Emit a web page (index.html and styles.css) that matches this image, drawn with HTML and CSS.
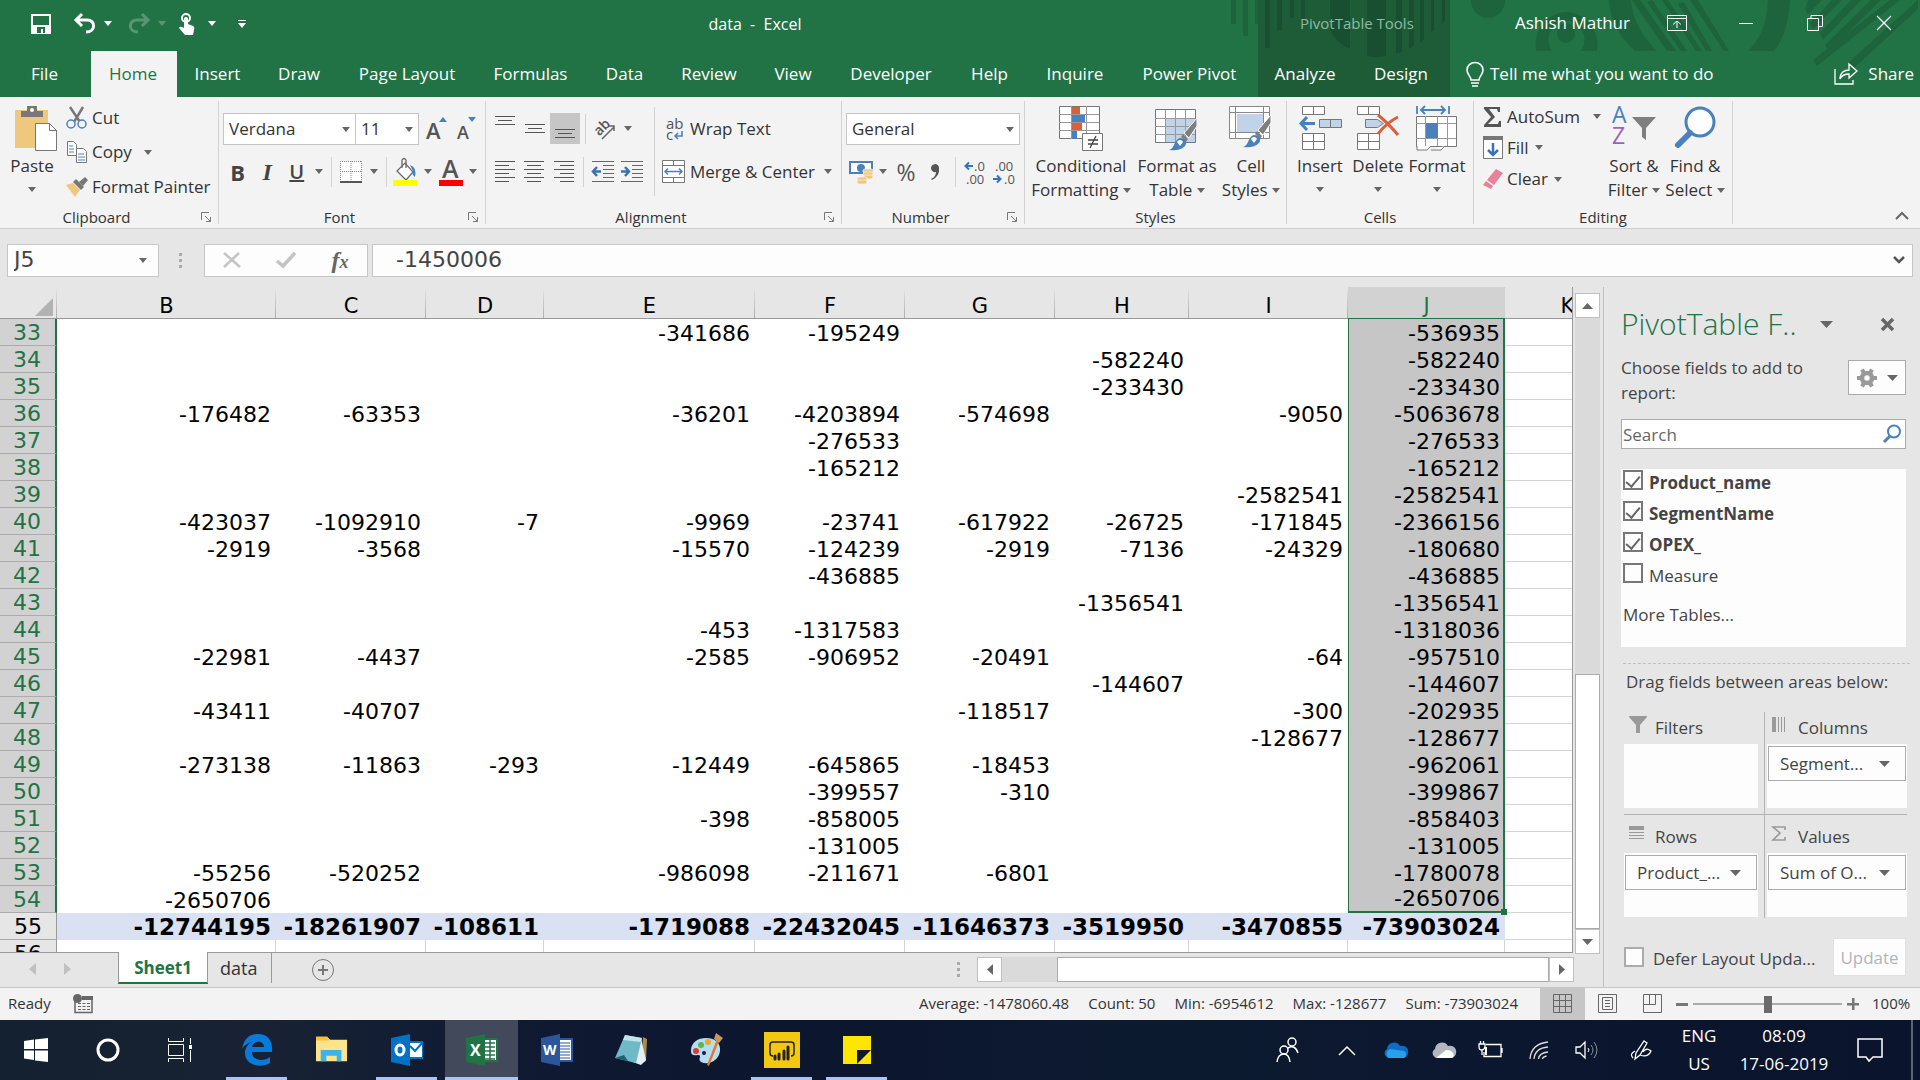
FILE: index.html
```html
<!DOCTYPE html>
<html lang="en">
<head>
<meta charset="utf-8">
<title>data - Excel</title>
<link rel="stylesheet" href="styles.css">
</head>
<body>
<svg class="defs" aria-hidden="true">
  <symbol id="caret" viewBox="0 0 8 5"><path d="M0 0h8L4 5z" fill="currentColor"/></symbol>
  <symbol id="launch" viewBox="0 0 10 10"><path d="M.5 8V.5H8M4 4l5 5M9.500 5v4.500H5" fill="none" stroke="#777"/></symbol>
  <symbol id="brush" viewBox="0 0 30 36"><path d="M29 1v8l-8 12-5-5z" fill="#7f7f7f" stroke="#fff"/><path d="M15 17l5 5-2 3-5-5z" fill="#7f7f7f"/><path d="M1 33c6-1 5-11 11-12 5 0 8 4 5 8-4 4-9 5-16 4z" fill="#4a81bd"/><path d="M9 25c2-3 5-2 6 0l-3 4z" fill="#fff"/></symbol>
</svg>

<header class="top">
  <svg class="deco" width="720" height="97" viewBox="0 0 720 97" aria-hidden="true">
    <g fill="#1d633c">
      <path d="M31 0h5v24h-5zM43 0h5v36h-5zM55 0h4v24h-4z"/>
      <path d="M271 0h34a17 18 0 0 1-34 0z"/>
      <path fill-rule="evenodd" d="M336 51a31 33 0 1 1 61 0h-16a18 19 0 1 0-29 0z"/><ellipse cx="366" cy="33" rx="9" ry="10"/>
      <path d="M409 0h22q2 28 26 51h-22Q410 28 409 0zM568 0h22q-2 34-16 51h-26q19-18 20-51zM432 0h8l36 51h-9zM447 2l34 49h6L452 0zM462 0l34 51h6L468 0zM478 4l28 47h6L484 2zM490 0l34 51h5L498 0z"/>
      <path d="M608 0h14l-14 14-3-5zM632 0h10l-29 29-3-6zM651 0h10l-38 40-3-7zM671 0h10l-52 51-4-6zM690 0h10l-83 66-4-6zM718 0v9l-64 59-6-5z"/>
    </g>
  </svg>
  <div class="context-bg">
    <svg width="192" height="97" viewBox="0 0 192 97" aria-hidden="true"><g fill="#184f30"><path d="M7 0h5v48H7zM19 0h5v30h-5zM32 0h4v18h-4zM43 0h4v24h-4z"/><path d="M72 0h20v49Q78 43 72 30zM109 0h19v56q-10 2-19 0zM138 0h6v52l-6 2zM151 0h5v46l-5 3zM162 0h4v39l-4 4zM173 0h3v30l-3 3zM184 0h3v20l-3 4z"/></g></svg>
  </div>
  <div class="qat">
    <button aria-label="Save" class="q-save"><svg width="20" height="20" viewBox="0 0 20 20"><path d="M1 1h18v18H1z" fill="none" stroke="#fff" stroke-width="2"/><path d="M2 11h16v8H2z" fill="#fff"/><path d="M6 13h8v6h-2v-4h-2v4H6z" fill="#217346"/></svg></button>
    <button aria-label="Undo" class="q-undo"><svg width="24" height="22" viewBox="0 0 24 22"><path d="M9 1L3 7l6 6M4 7h10c9 0 9 12-1 12" fill="none" stroke="#fff" stroke-width="3"/></svg></button>
    <button aria-label="Undo list" class="q-c"><svg width="8" height="5"><use href="#caret"/></svg></button>
    <button aria-label="Redo" class="q-redo faded"><svg width="24" height="22" viewBox="0 0 24 22"><path d="M15 1l6 6-6 6M20 7H10C1 7 1 19 11 19" fill="none" stroke="#fff" stroke-width="3"/></svg></button>
    <button aria-label="Redo list" class="q-c faded"><svg width="8" height="5"><use href="#caret"/></svg></button>
    <button aria-label="Touch mode" class="q-touch"><svg width="18" height="22" viewBox="0 0 18 22"><circle cx="8" cy="5" r="4" fill="none" stroke="#fff" stroke-width="2"/><path d="M6 5q2-2 4 0v6l5 2q2 1 1 4l-1 5H7l-6-7q1-2 3-1l2 1z" fill="#fff"/></svg></button>
    <button aria-label="Touch list" class="q-c"><svg width="8" height="5"><use href="#caret"/></svg></button>
    <button aria-label="Customize" class="q-cust"><svg width="8" height="8" viewBox="0 0 8 8"><path d="M0 0h8v1H0zM0 3h8L4 8z" fill="#fff"/></svg></button>
    <h1>data&nbsp; -&nbsp; Excel</h1>
  </div>
  <div class="context-name">PivotTable Tools</div>
  <div class="window">
    <span class="user">Ashish Mathur</span>
    <button aria-label="Ribbon display"><svg width="20" height="16" viewBox="0 0 20 16"><path d="M.5.500h19v15H.5zM.5 3.500h19M10 13V6M6 9.500L10 6l4 3.500" fill="none" stroke="#fff"/></svg></button>
    <button aria-label="Minimize"><svg width="16" height="16"><path d="M1 8.500h14" stroke="#fff"/></svg></button>
    <button aria-label="Restore"><svg width="16" height="16" viewBox="0 0 16 16"><path d="M.5 3.500h11v12H.5zM4 3V.5h11.500v11H12" fill="none" stroke="#fff"/></svg></button>
    <button aria-label="Close"><svg width="16" height="16"><path d="M1 1l14 14M15 1L1 15" stroke="#fff" stroke-width="1.300"/></svg></button>
  </div>
  <nav class="tabs">
    <a href="#">File</a><a href="#" class="on">Home</a><a href="#">Insert</a><a href="#">Draw</a><a href="#">Page Layout</a><a href="#">Formulas</a><a href="#">Data</a><a href="#">Review</a><a href="#">View</a><a href="#">Developer</a><a href="#">Help</a><a href="#">Inquire</a><a href="#">Power Pivot</a>
  </nav>
  <nav class="ctabs"><a href="#">Analyze</a><a href="#">Design</a></nav>
  <div class="tell">
    <button><svg width="18" height="25" viewBox="0 0 18 25"><path d="M5 18c0-4-4-5-4-10a8 7.500 0 0 1 16 0c0 5-4 6-4 10zM5 21h8M6 24h6" fill="none" stroke="#fff" stroke-width="1.600"/></svg>Tell me what you want to do</button>
    <button class="share"><svg width="24" height="22" viewBox="0 0 24 22"><path d="M1 6v15h18v-4M6 16c0-7 5-9 9-9V1l8 7-8 7v-4c-4 0-7 1-9 5z" fill="none" stroke="#fff" stroke-width="1.300"/></svg>Share</button>
  </div>
</header>

<section class="ribbon">
  <div class="group g-clip">
    <div class="body">
      <button class="big paste"><svg width="42" height="46" viewBox="0 0 42 46"><path d="M0 4h33v38H0z" fill="#edc87e"/><path d="M6 11V5h6V0h10v5h6v6z" fill="#777"/><circle cx="17" cy="4" r="2" fill="#fff"/><path d="M20.500 17.500h14l7 7v20h-21z" fill="#fff" stroke="#777"/><path d="M34.500 17v7.500H42" fill="none" stroke="#777"/></svg><span>Paste</span><svg class="c" width="8" height="5"><use href="#caret"/></svg></button>
      <div class="col">
        <button><svg width="22" height="22" viewBox="0 0 22 22"><path d="M4 0l10 15M17 0L8 15" stroke="#777" stroke-width="2.500"/><circle cx="5" cy="17" r="4" fill="#f3f3f3" stroke="#4a81bd" stroke-width="1.500"/><circle cx="16" cy="17" r="4" fill="#f3f3f3" stroke="#4a81bd" stroke-width="1.500"/></svg>Cut</button>
        <button><svg width="22" height="22" viewBox="0 0 22 22"><g fill="#fff" stroke="#777"><path d="M1.500.500h6l3 3v11h-9z"/><path d="M10.500 7.500h7l3 3v11h-10z"/></g><path d="M3 5h4M3 8h5M3 11h5M12 13h6M12 16h7M12 19h7" stroke="#4a81bd" stroke-width="1.200"/></svg>Copy<svg class="c" width="8" height="5"><use href="#caret"/></svg></button>
        <button><svg width="22" height="20" viewBox="0 0 22 20"><path d="M0 8l7-2 7 7-5 7z" fill="#edc87e"/><path d="M7 5l3-3 8 8-3 3z" fill="#777"/><path d="M13 5l6-5 3 3-5 6z" fill="#777"/></svg>Format Painter</button>
      </div>
    </div>
    <div class="name more">Clipboard<button aria-label="Clipboard settings"><svg width="10" height="10"><use href="#launch"/></svg></button></div>
  </div>

  <div class="group g-font">
    <div class="body rows">
      <div class="row">
        <label class="sel w134"><select aria-label="Font"><option>Verdana</option></select><svg width="8" height="5"><use href="#caret"/></svg></label><label class="sel w65"><select aria-label="Size"><option>11</option></select><svg width="8" height="5"><use href="#caret"/></svg></label>
        <button class="w30"><svg width="22" height="24" viewBox="0 0 22 24"><text x="0" y="22" font-size="22" class="ico-b">A</text><path d="M13 5l4-5 4 5z" fill="#4a81bd"/></svg></button>
        <button class="w30"><svg width="22" height="24" viewBox="0 0 22 24"><text x="2" y="22" font-size="18" class="ico-b">A</text><path d="M13 0h8l-4 5z" fill="#4a81bd"/></svg></button>
      </div>
      <div class="row">
        <button class="w30 gl"><b>B</b></button><button class="w30 gl"><i>I</i></button><button class="w30 gl"><u>U</u></button><button class="w16"><svg width="8" height="5"><use href="#caret"/></svg></button><hr>
        <button class="w30"><svg width="22" height="22" viewBox="0 0 22 22"><path d="M0 0h22v22H0z" fill="#fff"/><path d="M.5 0v21M21.500 0v21M11 0v21M0 .5h22M0 10.500h22" fill="none" stroke="#888" stroke-dasharray="1 1"/><path d="M0 21h22" stroke="#555" stroke-width="2"/></svg></button><button class="w16"><svg width="8" height="5"><use href="#caret"/></svg></button><hr>
        <button class="w30"><svg width="24" height="28" viewBox="0 0 24 28"><path d="M4 13l8-8 8 9-7 8z" fill="#fff" stroke="#666" stroke-width="1.200"/><path d="M9 10V2q2-3 4 0v8" fill="none" stroke="#666" stroke-width="1.300"/><path d="M17 7q7 2 5 12-4-3-2-6z" fill="#4a81bd"/><path d="M0 22h24v6H0z" fill="#ff0"/></svg></button><button class="w16"><svg width="8" height="5"><use href="#caret"/></svg></button>
        <button class="w30"><svg width="24" height="28" viewBox="0 0 24 28"><text x="3" y="20" font-size="25" class="ico-b">A</text><path d="M0 22h24v6H0z" fill="red"/></svg></button><button class="w16"><svg width="8" height="5"><use href="#caret"/></svg></button>
      </div>
    </div>
    <div class="name more">Font<button aria-label="Font settings"><svg width="10" height="10"><use href="#launch"/></svg></button></div>
  </div>

  <div class="group g-align">
    <div class="body">
      <div class="rows">
        <div class="row">
          <button class="w30 v-t"><svg width="20" height="10"><path d="M0 .5h20M3 4.500h14M0 8.500h20" stroke="#555"/></svg></button><button class="w30"><svg width="20" height="10"><path d="M0 .5h20M3 4.500h14M0 8.500h20" stroke="#555"/></svg></button><button class="w30 pressed v-b"><svg width="20" height="10"><path d="M0 .5h20M3 4.500h14M0 8.500h20" stroke="#555"/></svg></button><hr>
          <button class="w30"><svg width="22" height="22" viewBox="0 0 22 22"><text x="0" y="14" font-size="14" class="ico-b" transform="rotate(-45 8 10)">ab</text><path d="M8 21L20 9M15 8h5v5" fill="none" stroke="#666" stroke-width="1.500"/></svg></button><button class="w16"><svg width="8" height="5"><use href="#caret"/></svg></button>
        </div>
        <div class="row">
          <button class="w30"><svg width="20" height="22"><path d="M0 .5h20M0 4.500h14M0 8.500h20M0 12.500h14M0 16.500h20M0 20.500h14" stroke="#555"/></svg></button><button class="w30"><svg width="20" height="22"><path d="M0 .5h20M3 4.500h14M0 8.500h20M3 12.500h14M0 16.500h20M3 20.500h14" stroke="#555"/></svg></button><button class="w30"><svg width="20" height="22"><path d="M0 .5h20M6 4.500h14M0 8.500h20M6 12.500h14M0 16.500h20M6 20.500h14" stroke="#555"/></svg></button><hr>
          <button class="w30"><svg width="22" height="22"><path d="M0 .5h22M11 4.500h11M11 8.500h11M11 12.500h11M11 16.500h11M0 20.500h22" stroke="#666"/><path d="M9 10.500H1M5 6l-4 4.500L5 15" fill="none" stroke="#3a73b5" stroke-width="2.500"/></svg></button><button class="w30"><svg width="22" height="22"><path d="M0 .5h22M11 4.500h11M11 8.500h11M11 12.500h11M11 16.500h11M0 20.500h22" stroke="#666"/><path d="M0 10.500h8M4 6l4 4.500L4 15" fill="none" stroke="#3a73b5" stroke-width="2.500"/></svg></button>
        </div>
      </div>
      <div class="rows wrap">
        <div class="row"><button class="txt"><svg width="24" height="24" viewBox="0 0 24 24"><text x="4" y="12" font-size="15" class="ico">ab</text><text x="4" y="23" font-size="15" class="ico">c</text><path d="M20 14v5h-6M16 16l-3 3 3 3" fill="none" stroke="#4a81bd" stroke-width="1.600"/></svg>Wrap Text</button></div>
        <div class="row"><button class="txt"><svg width="24" height="24" viewBox="0 0 24 24"><path d="M.5.500h22v22H.5zM.5 5.500h22M.5 17.500h22M11.500.500v5M11.500 17.500v5" fill="#fff" stroke="#777"/><path d="M3 11.500h17M6 8.500l-3 3 3 3M17 8.500l3 3-3 3" fill="none" stroke="#4a81bd" stroke-width="1.500"/></svg>Merge &amp; Center</button><button class="w16"><svg width="8" height="5"><use href="#caret"/></svg></button></div>
      </div>
    </div>
    <div class="name more">Alignment<button aria-label="Alignment settings"><svg width="10" height="10"><use href="#launch"/></svg></button></div>
  </div>

  <div class="group g-num">
    <div class="body rows">
      <div class="row"><label class="sel w174"><select aria-label="Number format"><option>General</option></select><svg width="8" height="5"><use href="#caret"/></svg></label></div>
      <div class="row">
        <button class="w30"><svg width="24" height="24" viewBox="0 0 24 24"><path d="M0 1h24v13H0z" fill="#4a81bd"/><path d="M2 3h20v9H2z" fill="#fff"/><circle cx="12" cy="8" r="4" fill="#4a81bd"/><g fill="#edc87e" stroke="#f3f3f3" stroke-width=".8"><rect x="14" y="9" width="10" height="4" rx="2"/><rect x="14" y="12" width="10" height="4" rx="2"/><rect x="14" y="15" width="10" height="4" rx="2"/><rect x="8" y="17" width="10" height="4" rx="2"/><rect x="8" y="20" width="10" height="4" rx="2"/></g></svg></button><button class="w16"><svg width="8" height="5"><use href="#caret"/></svg></button>
        <button class="w30 pct">%</button><button class="w30"><svg width="10" height="16" viewBox="0 0 10 16"><path d="M1 15Q6 13 6 8a4 4 0 1 1 3-4q1 8-7 12z" fill="#555"/></svg></button><hr>
        <button class="w30"><svg width="24" height="26" viewBox="0 0 24 26"><text x="10" y="12" font-size="13" class="ico">.0</text><text x="2" y="25" font-size="13" class="ico">.00</text><path d="M9 7H2M5 3.500L1.500 7 5 10.500" fill="none" stroke="#3a73b5" stroke-width="2"/></svg></button><button class="w30"><svg width="24" height="26" viewBox="0 0 24 26"><text x="2" y="12" font-size="13" class="ico">.00</text><text x="11" y="25" font-size="13" class="ico">.0</text><path d="M0 20h8M4 16.500L7.500 20 4 23.500" fill="none" stroke="#3a73b5" stroke-width="2"/></svg></button>
      </div>
    </div>
    <div class="name more">Number<button aria-label="Number settings"><svg width="10" height="10"><use href="#launch"/></svg></button></div>
  </div>

  <div class="group g-styles">
    <div class="body">
      <button class="big w104"><svg width="44" height="46" viewBox="0 0 44 46"><path d="M.5.500h40v32H.5z" fill="#fff" stroke="#777"/><path d="M0 8.500h40M0 16.500h40M0 24.500h40M12.500 0v33M27.500 0v33" stroke="#999"/><path d="M13 1h8v7h-8zM13 17h10v7H13z" fill="#d9603b"/><path d="M13 9h13v7H13zM13 25h5v8h-5z" fill="#4a81bd"/><path d="M23.500 27.500h20v17h-20z" fill="#fff" stroke="#777"/><path d="M29 34h10M29 38h10M37 30l-6 12" stroke="#444" stroke-width="1.300"/></svg><span>Conditional<br>Formatting <svg width="8" height="5"><use href="#caret"/></svg></span></button>
      <button class="big w88"><svg width="44" height="46" viewBox="0 0 44 46"><path d="M.5 3.500h40v33H.5z" fill="#fff" stroke="#777"/><path d="M11 12h29v24H11z" fill="#c0d3e8"/><path d="M0 12.500h40M0 20.500h40M0 28.500h40M10.500 4v32M20.500 4v32M30.500 4v32" stroke="#999"/><use href="#brush" x="12" y="11" width="32" height="36"/></svg><span>Format as<br>Table <svg width="8" height="5"><use href="#caret"/></svg></span></button>
      <button class="big w60"><svg width="44" height="46" viewBox="0 0 44 46"><path d="M.5.500h40v32H.5zM.5 6.500h40M.5 26.500h40M6.500.500v32M34.500.500v32" fill="#fff" stroke="#888"/><path d="M8 8h26v18H8z" fill="#c0d3e8"/><use href="#brush" x="12" y="8" width="32" height="36"/></svg><span>Cell<br>Styles <svg width="8" height="5"><use href="#caret"/></svg></span></button>
    </div>
    <div class="name">Styles</div>
  </div>

  <div class="group g-cells">
    <div class="body">
      <button class="big w58"><svg width="44" height="46" viewBox="0 0 44 46"><path d="M4.500.500h22v8h-22zM15.500.500v8M4.500 27.500h22v16h-22zM4.500 35.500h22M15.500 27.500v16" fill="#fff" stroke="#777"/><path d="M21.500 13.500h22v8h-22zM32.500 13.500v8" fill="#c0d3e8" stroke="#777"/><path d="M17 17.500H3M9 11l-6 6.500L9 24" fill="none" stroke="#4a81bd" stroke-width="3"/></svg><span>Insert</span><svg class="c" width="8" height="5"><use href="#caret"/></svg></button>
      <button class="big w58"><svg width="44" height="46" viewBox="0 0 44 46"><path d="M1.500.500h22v8h-22zM12.500.500v8M1.500 27.500h22v16h-22zM1.500 35.500h22M12.500 27.500v16" fill="#fff" stroke="#777"/><path d="M9.500 13.500h12l6 4-6 4h-12z" fill="#c0d3e8" stroke="#777"/><path d="M22 9q10 8 20 20M42 11Q30 17 22 28" fill="none" stroke="#d9603b" stroke-width="3"/></svg><span>Delete</span><svg class="c" width="8" height="5"><use href="#caret"/></svg></button>
      <button class="big w60"><svg width="44" height="46" viewBox="0 0 44 46"><path d="M1.500 10.500h40v30h-40z" fill="#fff" stroke="#777"/><path d="M1 17.500h40M1 32.500h40M10.500 10v30M32.500 10v30M22.500 10v30" stroke="#999"/><path d="M11 17h12v15H11z" fill="#4a81bd"/><path d="M2 40v4h10l4-4M16 44h10l4-4" fill="#fff" stroke="#777"/><path d="M2 0v8M34 0v8M6 4h24M10 0L6 4l4 4M26 0l4 4-4 4" fill="none" stroke="#4a81bd" stroke-width="1.800"/></svg><span>Format</span><svg class="c" width="8" height="5"><use href="#caret"/></svg></button>
    </div>
    <div class="name">Cells</div>
  </div>

  <div class="group g-edit">
    <div class="body">
      <div class="col">
        <button class="autosum"><svg width="20" height="20" viewBox="0 0 20 20"><path d="M1 0h16v5h-2l-1-3H6l6 8-7 7h10l1-3h2v6H1v-2l7-8-7-8z" fill="#555"/></svg>AutoSum<svg class="c" width="8" height="5"><use href="#caret"/></svg></button>
        <button><svg width="20" height="24" viewBox="0 0 20 24"><path d="M.5.500h19v22H.5z" fill="#fff" stroke="#777"/><path d="M0 0h20v4H0z" fill="#777"/><path d="M10 7v12M5 14l5 5 5-5" fill="none" stroke="#3a73b5" stroke-width="2.500"/></svg>Fill<svg class="c" width="8" height="5"><use href="#caret"/></svg></button>
        <button><svg width="20" height="20" viewBox="0 0 20 20"><path d="M13 0l7 4-9 12-7-5zM3 12l7 5-2 3-8-4z" fill="#e8819a"/></svg>Clear<svg class="c" width="8" height="5"><use href="#caret"/></svg></button>
      </div>
      <button class="big w60"><svg width="44" height="46" viewBox="0 0 44 46"><text x="0" y="17" font-size="23" fill="#4a81bd">A</text><text x="0" y="38" font-size="23" fill="#9b63bd">Z</text><path d="M20 11h24L34 22v12l-4-3v-9z" fill="#7f7f7f"/></svg><span>Sort &amp;<br>Filter <svg width="8" height="5"><use href="#caret"/></svg></span></button>
      <button class="big w62"><svg width="44" height="46" viewBox="0 0 44 46"><circle cx="27" cy="16" r="14" fill="#fff" stroke="#4a81bd" stroke-width="3"/><path d="M17 27L5 39" stroke="#4a81bd" stroke-width="6" stroke-linecap="round"/></svg><span>Find &amp;<br>Select <svg width="8" height="5"><use href="#caret"/></svg></span></button>
    </div>
    <div class="name">Editing</div>
  </div>
  <button class="collapse" aria-label="Collapse ribbon"><svg width="14" height="9"><path d="M1 8l6-6 6 6" fill="none" stroke="#666" stroke-width="2"/></svg></button>
</section>

<section class="formula">
  <label class="namebox"><input aria-label="Name box" value="J5"><svg width="8" height="5"><use href="#caret"/></svg></label>
  <svg class="dots" width="3" height="15"><path d="M0 0h3v3H0zM0 6h3v3H0zM0 12h3v3H0z" fill="#aaa"/></svg>
  <div class="fx"><button aria-label="Cancel"><svg width="18" height="16"><path d="M1 1l16 14M16 1L1 15" stroke="#c4c4c4" stroke-width="2.500"/></svg></button><button aria-label="Enter"><svg width="20" height="16"><path d="M1 9l6 5L19 1" fill="none" stroke="#c4c4c4" stroke-width="3.500"/></svg></button><button><i>f</i><i class="x">x</i></button></div>
  <label class="fbox"><input aria-label="Formula" value="-1450006"><svg width="12" height="8"><path d="M1 1l5 5 5-5" fill="none" stroke="#555" stroke-width="2.500"/></svg></label>
</section>

<main>
  <section class="work">
    <div class="view">
      <div class="sheet">
        <table>
          <colgroup><col class="c-n"><col class="c-b"><col class="c-c"><col class="c-d"><col class="c-e"><col class="c-c"><col class="c-c"><col class="c-h"><col class="c-i"><col class="c-j"><col class="c-k"></colgroup>
          <thead><tr><th class="corner"><svg width="18" height="18"><path d="M18 0v18H0z" fill="#b2b2b2"/></svg><th>B<th>C<th>D<th>E<th>F<th>G<th>H<th>I<th class="sel-h">J<th>K</thead>
          <tbody>
            <tr><th>33<td><td><td><td>-341686<td>-195249<td><td><td><td>-536935<td>
            <tr><th>34<td><td><td><td><td><td><td>-582240<td><td>-582240<td>
            <tr><th>35<td><td><td><td><td><td><td>-233430<td><td>-233430<td>
            <tr><th>36<td>-176482<td>-63353<td><td>-36201<td>-4203894<td>-574698<td><td>-9050<td>-5063678<td>
            <tr><th>37<td><td><td><td><td>-276533<td><td><td><td>-276533<td>
            <tr><th>38<td><td><td><td><td>-165212<td><td><td><td>-165212<td>
            <tr><th>39<td><td><td><td><td><td><td><td>-2582541<td>-2582541<td>
            <tr><th>40<td>-423037<td>-1092910<td>-7<td>-9969<td>-23741<td>-617922<td>-26725<td>-171845<td>-2366156<td>
            <tr><th>41<td>-2919<td>-3568<td><td>-15570<td>-124239<td>-2919<td>-7136<td>-24329<td>-180680<td>
            <tr><th>42<td><td><td><td><td>-436885<td><td><td><td>-436885<td>
            <tr><th>43<td><td><td><td><td><td><td>-1356541<td><td>-1356541<td>
            <tr><th>44<td><td><td><td>-453<td>-1317583<td><td><td><td>-1318036<td>
            <tr><th>45<td>-22981<td>-4437<td><td>-2585<td>-906952<td>-20491<td><td>-64<td>-957510<td>
            <tr><th>46<td><td><td><td><td><td><td>-144607<td><td>-144607<td>
            <tr><th>47<td>-43411<td>-40707<td><td><td><td>-118517<td><td>-300<td>-202935<td>
            <tr><th>48<td><td><td><td><td><td><td><td>-128677<td>-128677<td>
            <tr><th>49<td>-273138<td>-11863<td>-293<td>-12449<td>-645865<td>-18453<td><td><td>-962061<td>
            <tr><th>50<td><td><td><td><td>-399557<td>-310<td><td><td>-399867<td>
            <tr><th>51<td><td><td><td>-398<td>-858005<td><td><td><td>-858403<td>
            <tr><th>52<td><td><td><td><td>-131005<td><td><td><td>-131005<td>
            <tr><th>53<td>-55256<td>-520252<td><td>-986098<td>-211671<td>-6801<td><td><td>-1780078<td>
            <tr class="last"><th>54<td>-2650706<td><td><td><td><td><td><td><td>-2650706<td>
          </tbody>
          <tfoot>
            <tr class="total"><th>55<td>-12744195<td>-18261907<td>-108611<td>-1719088<td>-22432045<td>-11646373<td>-3519950<td>-3470855<td>-73903024<td>
            <tr class="blank"><th>56<td><td><td><td><td><td><td><td><td><td>
          </tfoot>
        </table>
      </div>
      <div class="vscroll"><button aria-label="Scroll up"><svg width="11" height="6"><path d="M0 6l5.500-6L11 6z" fill="#666"/></svg></button><i class="gap"></i><i class="thumb"></i><button aria-label="Scroll down"><svg width="11" height="6"><path d="M0 0h11L5.500 6z" fill="#666"/></svg></button></div>
    </div>
    <div class="sheets">
      <button aria-label="Previous sheet" class="nav1"><svg width="7" height="12"><path d="M7 0v12L0 6z" fill="#c0c0c0"/></svg></button><button aria-label="Next sheet" class="nav2"><svg width="7" height="12"><path d="M0 0v12l7-6z" fill="#c0c0c0"/></svg></button>
      <a href="#" class="on">Sheet1</a><a href="#">data</a>
      <button aria-label="New sheet" class="plus"><svg width="24" height="24"><circle cx="12" cy="12" r="10.500" fill="none" stroke="#777"/><path d="M12 7v10M7 12h10" stroke="#777" stroke-width="2"/></svg></button>
      <svg class="dots" width="3" height="15"><path d="M0 0h3v3H0zM0 6h3v3H0zM0 12h3v3H0z" fill="#aaa"/></svg>
      <div class="hscroll"><button aria-label="Scroll left"><svg width="6" height="11"><path d="M6 0v11L0 5.500z" fill="#666"/></svg></button><i class="gap"></i><i class="thumb"></i><button aria-label="Scroll right"><svg width="6" height="11"><path d="M0 0v11l6-5.500z" fill="#666"/></svg></button></div>
    </div>
  </section>

  <aside>
    <div class="p-head"><h2>PivotTable F..</h2><button aria-label="Pane options"><svg width="13" height="7"><path d="M0 0h13L6.500 7z" fill="#666"/></svg></button><button aria-label="Close pane" class="x"><svg width="15" height="15"><path d="M2 2l11 11M13 2L2 13" stroke="#666" stroke-width="3.500"/></svg></button></div>
    <div class="p-choose"><p>Choose fields to add to report:</p><button aria-label="Tools"><svg width="20" height="20" viewBox="0 0 20 20"><circle cx="10" cy="10" r="5" fill="none" stroke="#999" stroke-width="4.500"/><path d="M0 10h4m12 0h4M5 1.500l2 3.500m6 10l2 3.500M15 1.500L13 5M7 15l-2 3.500" stroke="#999" stroke-width="4"/></svg><svg width="11" height="6"><path d="M0 0h11L5.500 6z" fill="#666"/></svg></button></div>
    <label class="search"><input placeholder="Search" aria-label="Search"><svg width="20" height="20"><circle cx="12" cy="7.500" r="6" fill="none" stroke="#4a81bd" stroke-width="2"/><path d="M8 12l-6 6" stroke="#4a81bd" stroke-width="3"/></svg></label>
    <div class="fields">
      <label><input type="checkbox" checked><b>Product_name</b></label>
      <label><input type="checkbox" checked><b>SegmentName</b></label>
      <label><input type="checkbox" checked><b>OPEX_</b></label>
      <label><input type="checkbox"><span>Measure</span></label>
      <a href="#">More Tables...</a>
    </div>
    <p class="drag">Drag fields between areas below:</p>
    <div class="areas">
      <section><h3><svg width="18" height="18"><path d="M0 0h18v1l-7 8v8H7V9L0 1z" fill="#999"/></svg>Filters</h3><div class="drop"></div></section>
      <section><h3><svg width="14" height="16"><path d="M0 0h4v15H0zM6 0h1v15H6zM9 0h1v15H9zM12 0h1v15h-1z" fill="#999"/></svg>Columns</h3><div class="drop"><button>Segment...<svg width="11" height="6"><path d="M0 0h11L5.500 6z" fill="#666"/></svg></button></div></section>
      <section><h3><svg width="16" height="16"><path d="M0 0h15v4H0zM0 6h15v1H0zM0 9h15v1H0zM0 12h15v1H0z" fill="#999"/></svg>Rows</h3><div class="drop"><button>Product_...<svg width="11" height="6"><path d="M0 0h11L5.500 6z" fill="#666"/></svg></button></div></section>
      <section><h3><svg width="14" height="16"><path d="M13 4V1H1l7 6-7 7h12v-3" fill="none" stroke="#999" stroke-width="1.600"/></svg>Values</h3><div class="drop"><button>Sum of O...<svg width="11" height="6"><path d="M0 0h11L5.500 6z" fill="#666"/></svg></button></div></section>
    </div>
    <div class="defer"><label><input type="checkbox"><span>Defer Layout Upda...</span></label><button disabled>Update</button></div>
  </aside>
</main>

<footer class="status">
  <span>Ready</span>
  <svg class="macro" width="20" height="20"><path d="M2 5v13.500h17V2" fill="none" stroke="#666" stroke-width="1.500"/><path d="M9 2h11v4H9z" fill="#666"/><circle cx="4.500" cy="4.500" r="4.500" fill="#666"/><path d="M5 9.500h12M5 12.500h12M5 15.500h12" stroke="#666" stroke-dasharray="3 1.500"/></svg>
  <div class="stats"><span>Average: -1478060.48</span><span>Count: 50</span><span>Min: -6954612</span><span>Max: -128677</span><span>Sum: -73903024</span></div>
  <button class="pressed" aria-label="Normal"><svg width="20" height="20"><path d="M.5.500h18v18H.5zM6.500.500v18M12.500.500v18M.5 6.500h18M.5 12.500h18" fill="none" stroke="#666"/></svg></button>
  <button aria-label="Page layout"><svg width="20" height="20"><path d="M.5.500h18v18H.5zM4.500 3.500h10v12h-10zM7 6.500h5M7 9.500h5M7 12.500h5" fill="none" stroke="#666"/></svg></button>
  <button aria-label="Page break"><svg width="20" height="20"><path d="M.5.500h18v18H.5zM.5 10.500h12v-10M6.500.500v10" fill="none" stroke="#666"/></svg></button>
  <button class="z" aria-label="Zoom out"><svg width="12" height="3"><path d="M0 0h12v3H0z" fill="#777"/></svg></button>
  <input type="range" min="0" max="100" value="50" aria-label="Zoom">
  <button class="z" aria-label="Zoom in"><svg width="12" height="12"><path d="M0 5h12v2.500H0zM5 0h2.500v12H5z" fill="#777"/></svg></button>
  <span class="pc">100%</span>
</footer>

<footer class="taskbar">
  <div class="sys">
    <button aria-label="Start"><svg width="24" height="24"><path d="M0 3l10-1.500V11H0zM11 1.500L24 0v11H11zM0 12.500h10V22L0 20.500zM11 12.500h13V24l-13-1.500z" fill="#fff"/></svg></button>
    <button aria-label="Cortana"><svg width="24" height="24"><circle cx="12" cy="12" r="10" fill="none" stroke="#fff" stroke-width="3"/></svg></button>
    <button aria-label="Task view"><svg width="26" height="24"><path d="M1.500 0v3.500h15V0M1.500 6.500h15v11h-15zM1.500 24v-3.500h15V24M23.500 0v6M23.500 12v12" fill="none" stroke="#fff"/><path d="M22 7h3v4h-3z" fill="#fff"/></svg></button>
  </div>
  <div class="apps">
    <button class="run" aria-label="Edge"><svg width="32" height="32" viewBox="0 0 32 32"><path d="M1 15C3 4 9 0 17 0c10 0 15 7 14 18H11c0 9 12 10 18 5v6c-10 6-25 2-25-10 0-5 3-9 7-11-4 1-8 3-10 7zM11 13h12c0-7-11-7-12 0z" fill="#0a7ad8"/></svg></button>
    <button aria-label="File Explorer"><svg width="32" height="28" viewBox="0 0 34 28"><path d="M0 0h12l3 3h18v23H0z" fill="#ffe38a"/><path d="M0 0h12l2 4H0z" fill="#fbc02d"/><path d="M5 14h22v12h-5v-6H11v6H5z" fill="#3cb4e6"/></svg></button>
    <button class="run" aria-label="Outlook"><svg width="32" height="32" viewBox="0 0 32 32"><path d="M17 7h15v18H17z" fill="#0072c6"/><path d="M19 9h12v14H19z" fill="#fff"/><path d="M19 12l5 5 8-9" stroke="#0072c6" stroke-width="2" fill="none"/><path d="M0 4l19-4v32L0 28z" fill="#0072c6"/><ellipse cx="9" cy="16" rx="4" ry="5" fill="none" stroke="#fff" stroke-width="3"/></svg></button>
    <button class="run active" aria-label="Excel"><svg width="32" height="32" viewBox="0 0 32 32"><path d="M17 5h14v22H17z" fill="#fff" stroke="#217346" stroke-width="2"/><path d="M19 9h10M19 13h10M19 17h10M19 21h10M19 25h10M24 5v22" stroke="#217346" stroke-width="1.500"/><path d="M0 4l19-4v32L0 28z" fill="#217346"/><text x="4" y="22" font-size="16" font-weight="700" fill="#fff">X</text></svg></button>
    <button aria-label="Word"><svg width="32" height="32" viewBox="0 0 32 32"><path d="M17 5h14v22H17z" fill="#fff" stroke="#2b579a" stroke-width="2"/><path d="M19 9h10M19 12h10M19 15h10M19 18h10M19 21h10M19 24h10" stroke="#2b579a"/><path d="M0 4l19-4v32L0 28z" fill="#2b579a"/><text x="2" y="21" font-size="14" font-weight="700" fill="#fff">W</text></svg></button>
    <button aria-label="Notepad"><svg width="34" height="32" viewBox="0 0 34 32"><path d="M28 3l4 2-1 22-5 3z" fill="#a98b4a"/><path d="M26 4l5 22-5 5-14-5z" fill="#e6eef0"/><path d="M10 1l17 3-6 25L0 24z" fill="#6fb9c9"/><path d="M10 1l17 3-1 4L8 6z" fill="#c5e4ea"/><path d="M0 24l9-3 4 6z" fill="#23606e"/></svg></button>
    <button aria-label="Paint"><svg width="36" height="34" viewBox="0 0 36 34"><path d="M17 5c10 0 15 6 14 13-1 9-11 15-19 11-4-3 2-7-3-7-5 1-7 0-7-4C2 9 9 5 17 5z" fill="#b5dcf2"/><circle cx="7" cy="18" r="3" fill="#e3372e"/><circle cx="12" cy="12" r="3" fill="#58b947"/><circle cx="19" cy="9" r="3" fill="#f5a623"/><circle cx="15" cy="20" r="2" fill="#14203a"/><path d="M28 6l2 2-10 25-2-1z" fill="#e07a2b"/><path d="M27 0l7 5-4 5-5-4z" fill="#c89663"/></svg></button>
    <button class="run" aria-label="Power BI"><svg width="36" height="36" viewBox="0 0 36 36"><path d="M0 0h36v36H0z" fill="#f2c811"/><path d="M9 24q-3 0-3-3v-8q0-3 3-3h18q3 0 3 3v8q0 3-3 3" fill="none" stroke="#222" stroke-width="1.500"/><path d="M11 24v3M15 22v5M20 19v8M24 15v12" stroke="#222" stroke-width="3" stroke-linecap="round"/></svg></button>
    <button class="run" aria-label="Sticky Notes"><svg width="28" height="28" viewBox="0 0 28 28"><path d="M0 0h28v28H0z" fill="#ffe600"/><path d="M14 14h14L14 28z" fill="#101830"/></svg></button>
  </div>
  <div class="tray">
    <button class="t70" aria-label="People"><svg width="24" height="26"><circle cx="16" cy="5" r="4" fill="none" stroke="#fff" stroke-width="1.500"/><circle cx="8" cy="13" r="4" fill="none" stroke="#fff" stroke-width="1.500"/><path d="M1 25q1-8 7-8 5 0 6 8M12 11q7-4 10 5" fill="none" stroke="#fff" stroke-width="1.500"/></svg></button>
    <button aria-label="Show hidden icons"><svg width="18" height="11"><path d="M1 10l8-8 8 8" fill="none" stroke="#fff" stroke-width="1.500"/></svg></button>
    <button aria-label="OneDrive"><svg width="25" height="16"><path d="M5 16a5 5 0 0 1-1-9 7 7 0 0 1 13-3 6 6 0 0 1 4 12z" fill="#0f6cc4"/><path d="M6 16a5 5 0 0 1 1-9l14 2a4 4 0 0 1 0 7z" fill="#28a0ea"/></svg></button>
    <button aria-label="OneDrive personal"><svg width="25" height="16"><path d="M5 16a5 5 0 0 1-1-9 7 7 0 0 1 13-3 6 6 0 0 1 4 12z" fill="#b4b8be"/><path d="M5 16l10-8q5 0 6 2a3.500 3.500 0 0 1 0 6z" fill="#fff"/></svg></button>
    <button aria-label="Battery"><svg width="26" height="18"><path d="M8 3.500h15v12H6V11M24 7v5M1 3h6v3q-1 3-3 3-3 0-3-3zM2.500 3V0M5.500 3V0M4 9v5" fill="none" stroke="#fff" stroke-width="1.300"/><path d="M7 6h2v8H7z" fill="#fff"/></svg></button>
    <button aria-label="Wi-Fi"><svg width="20" height="20"><path d="M1 19Q2 4 19 2M5 19Q6 8 19 7M9.500 19q.5-6 9.500-7M13.500 19q0-2 4-3" fill="none" stroke="#ddd" stroke-width="1.300"/></svg></button>
    <button aria-label="Volume"><svg width="24" height="20"><path d="M1 7h4l5-5v16l-5-5H1z" fill="none" stroke="#fff" stroke-width="1.300"/><path d="M13 8q2 2 0 4" fill="none" stroke="#fff"/><path d="M16 5q4 5 0 10M19 2q6 8 0 16" fill="none" stroke="#8a90a0"/></svg></button>
    <button class="t60" aria-label="Pen"><svg width="22" height="22"><path d="M14 2l3 2-7 12-5 4 1-6zM5 12q-6 3-2 7M10 16q8 3 11-4-5-4-8 1" fill="none" stroke="#fff" stroke-width="1.300"/></svg></button>
    <div class="lang">ENG<br>US</div>
    <div class="clock">08:09<br>17-06-2019</div>
    <button class="note" aria-label="Notifications"><svg width="26" height="24"><path d="M1 1h24v18H16l-4 4-3-4H1z" fill="none" stroke="#fff" stroke-width="1.500"/></svg></button>
  </div>
</footer>
</body>
</html>
```

FILE: styles.css
```css
* { box-sizing: border-box; }
body { margin: 0; height: 100vh; display: flex; flex-direction: column; overflow: hidden; background: #e6e6e6; color: #333; font: 17px/24px "Open Sans", "Noto Sans", sans-serif; }
button { border: 0; background: none; padding: 0; margin: 0; font: inherit; color: inherit; display: flex; align-items: center; justify-content: center; white-space: nowrap; }
a { color: inherit; text-decoration: none; }
h1, h2, h3, p { margin: 0; font: inherit; }
input, select { font: inherit; color: inherit; border: 0; padding: 0; margin: 0; }
svg { flex: none; overflow: visible; }
.defs { position: absolute; width: 0; height: 0; overflow: hidden; }

/* title bar and tabs */
.top { position: relative; display: grid; grid-template-columns: auto 192px 1fr; grid-template-rows: 51px 46px; background: #217346; color: #fff; flex: none; }
.top > * { position: relative; min-width: 0; }
.top > .deco { position: absolute; right: 0; top: 0; }
.context-bg { grid-area: 1 / 2 / 3 / 3; background: #1e5c38; }
.context-bg svg { display: block; }
.qat { grid-area: 1 / 1; display: flex; align-items: center; padding: 0 0 4px 30px; }
.q-save { width: 22px; }
.q-undo { width: 26px; margin-left: 20px; }
.q-redo { width: 26px; margin-left: 8px; }
.q-c { width: 20px; }
.q-touch { width: 20px; margin-left: 5px; }
.q-touch + .q-c { margin-left: 5px; }
.q-cust { width: 20px; margin-left: 10px; }
.faded { opacity: .25; }
h1 { flex: 1; text-align: center; font-size: 16px; }
.context-name { grid-area: 1 / 2; padding: 11px 0 0 42px; color: #8dbb9f; font-size: 15px; white-space: nowrap; }
.window { grid-area: 1 / 3; display: flex; align-items: center; justify-content: flex-end; padding: 0 2px 6px 0; }
.window button { width: 69px; height: 40px; }
.user { margin-right: 12px; font-size: 17px; white-space: nowrap; }
.tabs { grid-area: 2 / 1; display: grid; grid-template-columns: 91px 86px 83px 80px 136px 111px 77px 92px 76px 120px 77px 94px 135px; }
.tabs a, .ctabs a { display: flex; align-items: center; justify-content: center; white-space: nowrap; padding-right: 2px; }
.tabs .on { background: #f3f3f3; color: #217346; }
.ctabs { grid-area: 2 / 2; display: grid; grid-template-columns: 1fr 1fr; }
.tell { grid-area: 2 / 3; display: flex; justify-content: space-between; padding: 0 6px 0 16px; }
.tell svg { margin-right: 6px; }
.share svg { margin-right: 10px; }

/* ribbon */
.ribbon { display: flex; height: 132px; background: #f3f3f3; border-bottom: 1px solid #cdcdcd; flex: none; position: relative; }
.group { display: flex; flex-direction: column; border-right: 1px solid #d2d2d2; margin: 4px 0; flex: none; }
.body { flex: 1; min-height: 0; display: flex; padding: 0 4px; }
.name { height: 20px; flex: none; text-align: center; font-size: 15px; line-height: 26px; position: relative; }
.more { padding-right: 25px; }
.name button { position: absolute; right: 7px; top: 8px; }
.g-clip { width: 219px; }
.g-font { width: 267px; }
.g-align { width: 356px; }
.g-num { width: 183px; }
.g-styles { width: 262px; }
.g-cells { width: 187px; }
.g-edit { width: 259px; }
.ribbon use, .formula use { color: #666; }
.big { flex-direction: column; justify-content: flex-start; width: 56px; padding-top: 5px; }
.big > svg:first-child { margin-bottom: 2px; }
.paste > svg:first-child { margin-left: 8px; }
.big .c { margin-top: 9px; }
.big span svg { vertical-align: middle; margin-bottom: 2px; }
.col { display: flex; flex-direction: column; padding-left: 6px; }
.col button { flex: 1; justify-content: flex-start; gap: 4px; }
.col .c { margin-left: 8px; }
.g-edit .col { width: 126px; padding: 0 0 9px 5px; }
.g-edit .col .c { margin-left: 2px; }
.g-edit .autosum .c { margin-left: 9px; }
.rows { display: flex; flex-direction: column; justify-content: flex-start; gap: 8px; padding-top: 10px; }
.row { display: flex; height: 35px; align-items: center; flex: none; }
.row button { height: 31px; }
.row hr { width: 1px; height: 30px; margin: 0 4px; border: 0; background: #d2d2d2; }
.w16 { width: 16px; } .w30 { width: 30px; }
.w58 { width: 58px; } .w60 { width: 60px; } .w62 { width: 62px; }
.w65 { width: 65px; } .w88 { width: 88px; } .w104 { width: 104px; }
.w134 { width: 135px; } .w174 { width: 174px; }
.sel { position: relative; height: 32px; border: 1px solid #c6c6c6; background: #fff; }
.sel select { appearance: none; width: 100%; height: 100%; background: none; padding-left: 5px; }
.sel svg { position: absolute; right: 5px; top: 13px; }
.sel + .sel { margin-left: -1px; }
.sel + button { margin-left: 3px; }
.ico-b { fill: #555; font-weight: 600; }
.ico { fill: #555; }
.gl { font-size: 22px; color: #444; }
.gl i { font-family: "Liberation Serif", serif; font-size: 24px; font-weight: 700; }
.gl u { font-weight: 600; font-size: 20px; }
.pressed { background: #c6c6c6; }
.v-t { align-items: flex-start; padding-top: 3px; }
.v-b { align-items: flex-end; padding-bottom: 5px; }
.wrap { border-left: 1px solid #d2d2d2; margin: 6px 0 8px 7px; padding: 4px 0 0 7px; }
.g-align .rows:first-child { width: 157px; }
.g-align .rows:first-child hr { margin-left: 5px; }
.txt svg { margin-right: 4px; }
.txt + .w16 { margin-left: 5px; }
.g-num hr { margin: 0 5px; }
.pct { font-size: 23px; color: #555; }
.collapse { position: absolute; right: 11px; bottom: 8px; }

/* formula bar */
.formula { display: flex; align-items: center; height: 58px; padding: 4px 7px 0; flex: none; font-size: 20px; }
.namebox, .fx, .fbox { height: 33px; border: 1px solid #c6c6c6; background: #fdfdfd; display: flex; align-items: center; }
.namebox { width: 152px; padding: 0 11px 0 6px; }
.namebox input, .fbox input { flex: 1; min-width: 0; background: none; font-family: "DejaVu Sans", sans-serif; font-size: 22px; color: #444; }
.formula .dots { margin: 0 22px 0 20px; }
.fx { width: 164px; }
.fx button { flex: 1; }
.fx i { font: italic 700 24px "Liberation Serif", serif; color: #666; }
.fx .x { font-size: 18px; padding-top: 4px; }
.fbox { flex: 1; margin-left: 4px; padding: 0 7px 0 23px; }

/* worksheet */
main { flex: 1; display: flex; min-height: 0; }
.work { flex: 1; min-width: 0; display: flex; flex-direction: column; }
.view { flex: 1; min-height: 0; display: flex; }
.sheet { flex: 1; min-width: 0; overflow: hidden; background: #fff; border-right: 1px solid #999; border-bottom: 1px solid #999; }
table { border-collapse: separate; border-spacing: 0; table-layout: fixed; width: 1630px; font: 22px/25px "DejaVu Sans", sans-serif; color: #000; }
.c-n { width: 57px; } .c-b { width: 219px; } .c-c { width: 150px; } .c-d { width: 118px; } .c-e { width: 211px; }
.c-h { width: 134px; } .c-i { width: 159px; } .c-j { width: 157px; } .c-k { width: 125px; }
th, td { padding: 2px 0 0; height: 27px; font-weight: 400; }
tbody th, tfoot th { padding: 1px 0 0; }
thead th { height: 32px; background: linear-gradient(#e6e6e6, #ababab) right / 1px 100% no-repeat #e6e6e6; border-bottom: 1px solid #999; padding-top: 7px; line-height: 24px; font-size: 21px; }
thead .corner { text-align: right; padding: 9px 4px 0 0; line-height: 0; }
thead .sel-h { background: #d2d2d2; color: #217346; border-bottom: 1px solid #217346; }
tbody th { background: #d2d2d2; color: #217346; border-bottom: 1px solid #ababab; border-right: 2px solid #217346; padding-right: 1px; }
tfoot th { background: #e6e6e6; border-bottom: 1px solid #ababab; border-right: 1px solid #999; }
td { text-align: right; padding-right: 5px; }
td:last-child, .blank td { border-right: 1px solid #d4d4d4; border-bottom: 1px solid #d4d4d4; }
tbody td:nth-child(10) { background: #c6c6c6; border-left: 1px solid #217346; border-right: 2px solid #217346; padding-right: 3px; }
tbody .last td:nth-child(10) { border-bottom: 2px solid #217346; position: relative; padding-top: 0; }
tbody .last td:nth-child(10)::after { content: ""; position: absolute; right: -4px; bottom: -4px; width: 6px; height: 6px; background: #217346; }
.total td:not(:last-child) { background: #d9e1f2; font-weight: 700; font-size: 23px; }
.vscroll { width: 31px; padding: 6px 3px 0 2px; border-right: 1px solid #c0c0c0; display: flex; flex-direction: column; }
.vscroll button, .hscroll button { background: #fff; border: 1px solid #c0c0c0; width: 25px; height: 25px; flex: none; }
.vscroll button:last-child { margin-bottom: -1px; }
.gap { background: #dadada; }
.thumb { background: #fff; border: 1px solid #ababab; }
.vscroll .gap { flex: 358; }
.vscroll .thumb { flex: 255; }
.sheets { height: 34px; display: flex; align-items: flex-start; border-right: 1px solid #c0c0c0; padding-right: 29px; font-size: 18px; }
.nav1 { margin: 10px 0 0 29px; }
.nav2 { margin: 10px 0 0 28px; }
.sheets a { height: 30px; line-height: 30px; padding: 0 14px 0 12px; border-right: 1px solid #999; }
.sheets .on { width: 90px; padding: 0; text-align: center; margin: -1px 0 0 47px; background: #fff; border-left: 1px solid #999; border-bottom: 2px solid #217346; color: #217346; font-weight: 700; height: 32px; line-height: 32px; position: relative; font-size: 17px; }
.plus { margin: 5px auto 0 39px; }
.sheets .dots { margin: 9px 17px 0 0; }
.hscroll { width: 597px; display: flex; padding-top: 4px; height: 29px; }
.hscroll .gap { flex: 55; }
.hscroll .thumb { flex: 491; }

/* field list pane */
aside { width: 316px; padding: 0 14px 0 17px; font-size: 18px; line-height: 25px; color: #444; flex: none; }
.p-head { display: flex; align-items: center; padding-top: 17px; height: 57px; }
h2 { font-size: 30px; font-weight: 300; color: #217346; white-space: nowrap; width: 185px; line-height: 40px; }
.p-head .x { margin: 0 0 0 auto; padding-right: 11px; }
.p-head button { margin-left: 14px; }
.p-choose { display: flex; justify-content: space-between; padding-top: 11px; height: 75px; }
.p-choose p { width: 200px; white-space: normal; font-size: 17px; }
.p-choose button { width: 58px; height: 35px; margin-top: 5px; background: #fdfdfd; border: 1px solid #ababab; gap: 10px; }
.search { display: flex; align-items: center; height: 30px; border: 1px solid #ababab; background: #fff; padding: 0 3px 0 1px; }
.search input { flex: 1; min-width: 0; background: none; font-size: 17px; }
.search input::placeholder { color: #666; opacity: 1; }
.fields { margin-top: 20px; height: 178px; background: #fdfdfd; padding: 1px 2px; font-size: 17px; }
.fields label { display: flex; height: 31px; gap: 6px; }
.fields a { display: block; padding-top: 8px; }
input[type=checkbox] { appearance: none; width: 20px; height: 20px; border: 2px solid #777; background: #fdfdfd; flex: none; display: grid; place-items: center; }
input[type=checkbox]:checked::before { content: ""; width: 6px; height: 12px; border: solid #666; border-width: 0 2px 2px 0; rotate: 40deg; }
.drag { margin: 16px -4px 0 2px; border-top: 1px dashed #c0c0c0; padding: 5px 0 0 3px; height: 49px; white-space: nowrap; font-size: 17px; }
.areas { display: grid; grid-template-columns: 141px 1fr; margin: 0 -1px 0 3px; }
.areas section { padding: 0 0 6px 2px; height: 103px; }
.areas section:nth-child(odd) { padding-right: 6px; padding-left: 0; border-right: 1px solid #b4b4b4; }
.areas section:nth-child(-n+2) { border-bottom: 1px solid #b4b4b4; }
.areas section:nth-child(n+3) { padding-top: 6px; }
h3 { display: flex; align-items: center; height: 32px; gap: 8px; padding: 0 0 2px 5px; font-size: 17px; }
h3 svg { margin-bottom: 4px; width: 18px; }
.drop { height: 64px; background: #fdfdfd; padding: 2px 1px; }
.drop button { width: 100%; height: 35px; border: 1px solid #ababab; justify-content: space-between; padding: 0 15px 0 11px; font-size: 17px; }
.defer { display: flex; justify-content: space-between; padding: 20px 0 0 3px; font-size: 17px; }
.defer label { display: flex; gap: 9px; padding-top: 9px; white-space: nowrap; }
.defer label span { line-height: 23px; }
.defer input[type=checkbox] { border-color: #ababab; }
.defer button { width: 73px; height: 38px; background: #fdfdfd; border: 1px solid #e0e0e0; color: #b0b4ba; }

/* status bar */
.status { display: flex; align-items: center; height: 33px; background: #f3f3f3; border-top: 1px solid #c6c6c6; padding: 0 8px; font-size: 15px; flex: none; }
.status span { padding-bottom: 2px; }
.macro { margin-left: 22px; }
.stats { margin-left: auto; display: flex; gap: 19px; margin-right: 22px; white-space: nowrap; }
.status button { width: 45px; height: 32px; }
.status .z { width: 14px; }
.status input { appearance: none; width: 149px; height: 18px; margin: 0 4px; background: linear-gradient(#ababab, #ababab) center / 100% 2px no-repeat; }
.status input::-webkit-slider-thumb { appearance: none; width: 8px; height: 17px; background: #6a6a6a; }
.pc { margin-left: 12px; width: 40px; white-space: nowrap; }

/* taskbar */
.taskbar { display: flex; height: 60px; background: linear-gradient(90deg, #142130, #182234 14%, #101a33 25%, #0c162e 40%, #0c1a30 60%, #0a142c 100%); color: #fff; flex: none; }
.sys, .apps, .tray { display: flex; }
.sys button { width: 72px; }
.apps { gap: 2px; margin-left: 4px; }
.apps button { width: 73px; position: relative; }
.apps .run::after { content: ""; position: absolute; left: 6px; right: 6px; bottom: 0; height: 3px; background: #a9c4f5; }
.apps .active { background: #41495b; }
.apps .active::after { left: 0; right: 0; }
.tray { margin-left: auto; align-items: center; border-right: 2px solid #5a6376; margin-right: 7px; font-size: 17px; line-height: 28px; text-align: center; }
.tray button { width: 48px; height: 60px; }
.tray .t60 { width: 60px; }
.tray .t70 { width: 70px; }
.lang { width: 56px; }
.clock { width: 114px; }
.tray .note { width: 58px; margin-right: 12px; }
```
